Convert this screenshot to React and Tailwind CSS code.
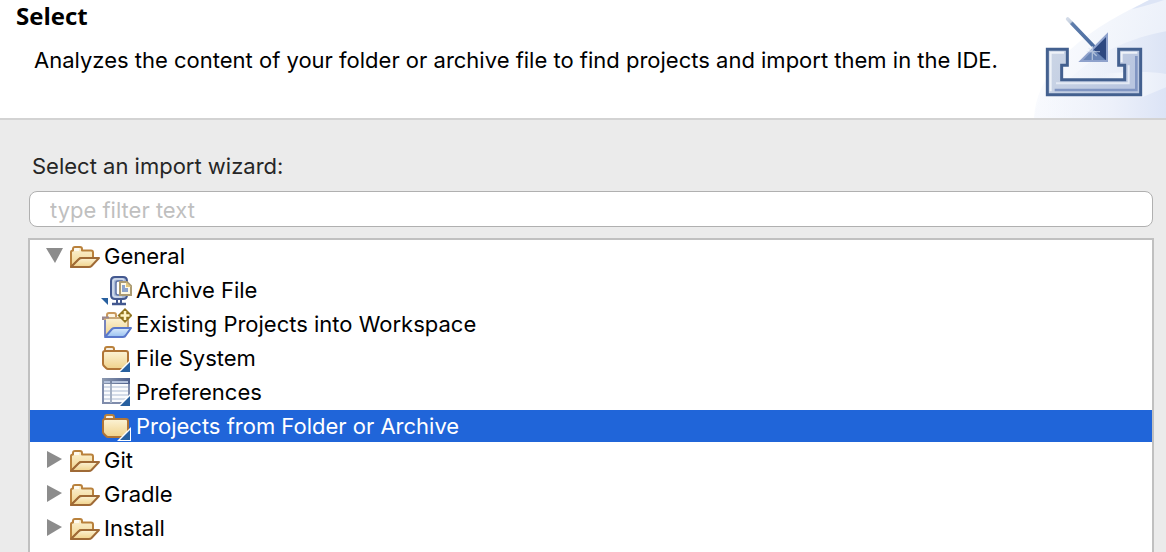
import { useState } from 'react';
import clsx from 'clsx';

function ImportBanner() {
  return (
    <svg className="w-[146px] h-[118px] shrink-0" viewBox="0 0 438 354" aria-hidden="true">
      <defs>
        <linearGradient id="sky" x1="0" y1="0.3" x2="1" y2="0.6">
          <stop offset="0" stopColor="#fcfdff" />
          <stop offset="1" stopColor="#eaeff9" />
        </linearGradient>
        <linearGradient id="skyInner" x1="0" y1="0" x2="1" y2="0">
          <stop offset="0" stopColor="#f3f6fc" stopOpacity="0.3" />
          <stop offset="1" stopColor="#dce4f5" />
        </linearGradient>
        <linearGradient id="skyLow" x1="0" y1="0" x2="1" y2="0">
          <stop offset="0" stopColor="#f6f8fd" stopOpacity="0.3" />
          <stop offset="0.6" stopColor="#ecf0fa" />
          <stop offset="1" stopColor="#dce4f6" />
        </linearGradient>
        <linearGradient id="streak" x1="0" y1="0" x2="1" y2="0">
          <stop offset="0" stopColor="#f4f7fc" stopOpacity="0" />
          <stop offset="0.4" stopColor="#f4f7fc" />
          <stop offset="1" stopColor="#e9eef9" />
        </linearGradient>
        <linearGradient id="tray" x1="0" y1="0" x2="1" y2="0.3">
          <stop offset="0" stopColor="#ccd6e6" />
          <stop offset="1" stopColor="#b9c6e0" />
        </linearGradient>
        <linearGradient id="shaft" gradientUnits="userSpaceOnUse" x1="143" y1="57" x2="221" y2="139">
          <stop offset="0" stopColor="#d3dbe8" />
          <stop offset="0.12" stopColor="#c3cede" />
          <stop offset="0.16" stopColor="#5f7eac" />
          <stop offset="1" stopColor="#4a6ba0" />
        </linearGradient>
        <linearGradient id="head" x1="0" y1="0" x2="1" y2="0">
          <stop offset="0" stopColor="#7f98c4" />
          <stop offset="1" stopColor="#4a6aa4" />
        </linearGradient>
        <filter id="soft">
          <feGaussianBlur stdDeviation="2" />
        </filter>
      </defs>
      <path d="M42 354C48 230 150 110 388 0H438V354Z" fill="url(#sky)" />
      <path d="M388 0C372 8 352 18 336 28C375 18 405 10 438 -2V0Z" fill="#dde5f6" />
      <path d="M100 290C190 180 300 120 438 94V300Z" fill="url(#skyInner)" />
      <path d="M42 354C48 320 56 300 70 280L438 250V354Z" fill="url(#skyLow)" />
      <path d="M240 222C330 215 390 214 438 222V262L366 292L240 290Z" fill="url(#streak)" />
      <path
        d="M82 148H142V196H125V239H314V196H296V148H362V284H82Z"
        fill="url(#tray)"
        stroke="#43608f"
        strokeWidth="9"
      />
      <g fill="none" filter="url(#soft)">
        <path d="M104 270H349V168" stroke="#8196c3" strokeWidth="8" />
        <path d="M92 274V158H132" stroke="#eef2f8" strokeWidth="6" />
        <path d="M108 250H326V196" stroke="#e3e9f4" strokeWidth="6" />
        <path d="M305 187V158H352" stroke="#eef2f8" strokeWidth="6" />
      </g>
      <path d="M143 57L221 139" stroke="url(#shaft)" strokeWidth="11" strokeLinecap="round" />
      <path d="M175 186L264 97V186Z" fill="#8fa2cc" />
      <path d="M190 180L258 112V180Z" fill="url(#head)" />
      <path d="M221 149L258 112V180Z" fill="#2d4880" />
      <path d="M201 169L221 149L255 180H190Z" fill="#6985b6" />
      <path d="M217 138V180M200 155H240M206 144L230 168" stroke="#dbe4f1" strokeWidth="4" opacity="0.6" />
    </svg>
  );
}

function IconDefs() {
  return (
    <svg className="absolute size-0" aria-hidden="true">
      <defs>
        <linearGradient id="paper" x1="0" y1="0" x2="0" y2="1">
          <stop offset="0" stopColor="#fcf3d6" />
          <stop offset="1" stopColor="#f0d28a" />
        </linearGradient>
        <linearGradient id="blueFlap" x1="0" y1="0" x2="0" y2="1">
          <stop offset="0" stopColor="#dcecfc" />
          <stop offset="1" stopColor="#97c0f0" />
        </linearGradient>
        <linearGradient id="tableHead" x1="0" y1="0" x2="1" y2="0">
          <stop offset="0" stopColor="#8d9ab0" />
          <stop offset="1" stopColor="#4d5f8c" />
        </linearGradient>
      </defs>
    </svg>
  );
}

function OpenFolderIcon() {
  return (
    <svg className="size-8 shrink-0" viewBox="0 0 32 32" aria-hidden="true">
      <path
        d="M3 26V12Q3 10.500 5 10.500V9Q5 7 7 7H12Q14 7 14 9V10.500H23Q25 10.500 25 12.500V18H12L3 27Z"
        fill="url(#paper)"
        stroke="#b9813c"
        strokeWidth="2"
        strokeLinejoin="round"
      />
      <path d="M6 10V9Q6 8 7 8H11V11H6Z" fill="#fff" opacity="0.7" />
      <path
        d="M3 27L10.500 19.500Q12 18 14 18H31L23.500 26Q22.500 27 21 27Z"
        fill="url(#paper)"
        stroke="#9f6a36"
        strokeWidth="2"
        strokeLinejoin="round"
      />
    </svg>
  );
}

function WizardCorner() {
  return (
    <>
      <path d="M17 31L31 17V31Z" fill="#fff" />
      <path d="M20 30L30 20V30Z" fill="#28609f" />
    </>
  );
}

function FolderIcon() {
  return (
    <svg className="size-8 shrink-0" viewBox="0 0 32 32" aria-hidden="true">
      <path
        d="M5 11V7Q5 5 7 5H12Q14 5 14 7V11"
        fill="#f6efe4"
        stroke="#b9813c"
        strokeWidth="2"
      />
      <path
        d="M3 11Q3 9 5 9H26Q28 9 28 11V24Q28 27 25 27H8Q7 27 6 26L4 24Q3 23 3 22Z"
        fill="url(#paper)"
        stroke="#b07536"
        strokeWidth="2"
      />
      <WizardCorner />
    </svg>
  );
}

function ArchiveIcon() {
  return (
    <svg className="size-8 shrink-0" viewBox="0 0 32 32" aria-hidden="true">
      <path d="M1 24H8V31Z" fill="#28609f" />
      <path
        d="M27 8V7Q27 3 23 3H15Q11 3 11 7V21Q11 25 15 25H23Q27 25 27 21V20"
        fill="#a9bad9"
        stroke="#43588f"
        strokeWidth="2"
      />
      <path
        d="M24 6Q23 5 22 5H16Q13 5 13 8V20Q13 23 16 23H22"
        fill="none"
        stroke="#d3ddec"
        strokeWidth="1.500"
      />
      <path d="M16 19V9Q16 7 18 7H22V21H18Q16 21 16 19Z" fill="#fff" stroke="#5d72a5" strokeWidth="1.500" />
      <path d="M17 26V30M21 26V30" stroke="#43588f" strokeWidth="2" />
      <path d="M12 30H26" stroke="#43588f" strokeWidth="2.500" />
      <path d="M20 8H27L31 12V21H20Z" fill="#fff9e5" stroke="#ab9b74" strokeWidth="2" />
      <path d="M26 8V13H31Z" fill="#e3c77c" />
      <path d="M22 11H25V14H28V18H22Z" fill="#8ba3cd" />
    </svg>
  );
}

function ProjectsIcon() {
  return (
    <svg className="size-8 shrink-0" viewBox="0 0 32 32" aria-hidden="true">
      <path d="M7 10V7Q7 5 9 5H14Q16 5 16 7V9" fill="#fdf6e4" stroke="#c9985c" strokeWidth="2" />
      <path d="M5 10H28V24L8 28L5 26Z" fill="url(#paper)" stroke="#c9a878" strokeWidth="2" />
      <path d="M2 9.500H9M3 9V12" stroke="#9a8790" strokeWidth="2" />
      <path d="M5 12V28" stroke="#7884bd" strokeWidth="2" />
      <path
        d="M5 29L12 21Q13 20 15 20H31L26 27Q25 29 23 29Z"
        fill="url(#blueFlap)"
        stroke="#5a78cb"
        strokeWidth="2"
        strokeLinejoin="round"
      />
      <path d="M25 0L32.500 7.500L25 15L17.500 7.500Z" fill="#92741f" />
      <path d="M25 3V12M20.500 7.500H29.500" stroke="#fff3c4" strokeWidth="2.500" />
    </svg>
  );
}

function PreferencesIcon() {
  return (
    <svg className="size-8 shrink-0" viewBox="0 0 32 32" aria-hidden="true">
      <rect x="3" y="3" width="26" height="24" fill="#fafbfd" stroke="#7f8cab" strokeWidth="2" />
      <path d="M4 10H28V12H4ZM4 14H28V16H4ZM4 18H28V20H4ZM4 22H28V24H4Z" fill="#d3dbe8" />
      <path d="M11 8V27" stroke="#a4b0c4" strokeWidth="2" />
      <rect x="2" y="2" width="28" height="6" fill="url(#tableHead)" />
      <path d="M4 6H10M12 6H28" stroke="#b4c2dc" strokeWidth="2" />
      <WizardCorner />
    </svg>
  );
}

const categories = [
  {
    name: 'General',
    wizards: [
      { name: 'Archive File', Icon: ArchiveIcon },
      { name: 'Existing Projects into Workspace', Icon: ProjectsIcon },
      { name: 'File System', Icon: FolderIcon },
      { name: 'Preferences', Icon: PreferencesIcon },
      { name: 'Projects from Folder or Archive', Icon: FolderIcon },
    ],
  },
  { name: 'Git', wizards: [] },
  { name: 'Gradle', wizards: [] },
  { name: 'Install', wizards: [] },
];

function Category({ category, open, onToggle, selected, onSelect }) {
  return (
    <>
      <li>
        <button
          type="button"
          aria-expanded={open}
          onClick={onToggle}
          className="flex h-8 w-full items-center gap-1 pl-4 text-left"
        >
          <svg className="size-[18px] shrink-0" viewBox="0 0 18 18" aria-hidden="true">
            <path d={open ? 'M0 1H17L9 16Z' : 'M1 0L16 8L1 17Z'} fill="#8c8c8c" />
          </svg>
          <OpenFolderIcon />
          <span>{category.name}</span>
        </button>
      </li>
      {open &&
        category.wizards.map(({ name, Icon }) => (
          <li key={name}>
            <button
              type="button"
              aria-pressed={selected === name}
              onClick={() => onSelect(name)}
              className={clsx(
                'flex h-8 w-full items-center gap-1 pl-[70px] text-left',
                selected === name && 'bg-[#2065d9] text-white'
              )}
            >
              <Icon />
              <span>{name}</span>
            </button>
          </li>
        ))}
    </>
  );
}

export default function App() {
  const [filter, setFilter] = useState('');
  const [opened, setOpened] = useState(['General']);
  const [selected, setSelected] = useState('Projects from Folder or Archive');

  const toggle = (name) => {
    setOpened(opened.includes(name) ? opened.filter((n) => n !== name) : [...opened, name]);
  };

  const visible = categories
    .map((c) => ({
      ...c,
      wizards: c.wizards.filter((w) => w.name.toLowerCase().includes(filter.toLowerCase())),
    }))
    .filter((c) => !filter || c.wizards.length > 0);

  return (
    <div className="flex min-h-screen flex-col bg-[#ebebeb] font-['Inter',sans-serif] text-[22px] leading-8 text-black">
      <IconDefs />
      <header className="flex justify-between border-b-2 border-[#d3d3d3] bg-white">
        <div className="pl-4">
          <h1 className="font-['Open_Sans','Noto_Sans',sans-serif] text-2xl leading-8 font-bold">Select</h1>
          <p className="mt-3 pl-[18px] whitespace-nowrap">
            Analyzes the content of your folder or archive file to find projects and import them in the IDE.
          </p>
        </div>
        <ImportBanner />
      </header>

      <main className="flex flex-1 flex-col pt-[30px] pr-3 pl-7">
        <label htmlFor="filter" className="pl-1 text-[#262626]">
          Select an import wizard:
        </label>
        <input
          id="filter"
          type="text"
          value={filter}
          onChange={(e) => setFilter(e.target.value)}
          placeholder="type filter text"
          className="mx-px mt-[9px] h-9 rounded-lg border border-[#b0b0b0] bg-white px-5 pt-0.5 placeholder:text-[#bfbfbf] focus:outline-none"
        />
        <ul className="mt-[11px] flex flex-1 flex-col gap-0.5 border-2 border-b-0 border-[#c0c0c0] bg-white">
          {visible.map((category) => (
            <Category
              key={category.name}
              category={category}
              open={opened.includes(category.name)}
              onToggle={() => toggle(category.name)}
              selected={selected}
              onSelect={setSelected}
            />
          ))}
        </ul>
      </main>
    </div>
  );
}
